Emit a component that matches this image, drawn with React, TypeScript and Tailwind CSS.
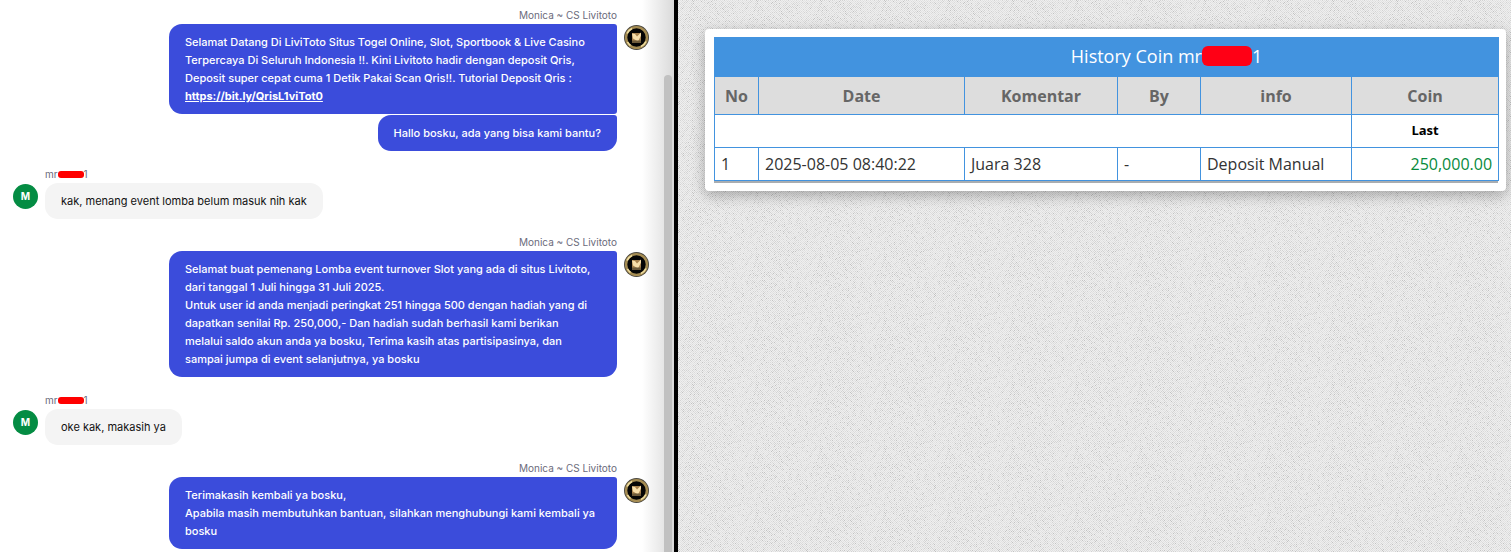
import clsx from "clsx"
import type { ReactNode } from "react"

type Message = {
  from: "agent" | "user"
  bubbles: ReactNode[]
}

const messages: Message[] = [
  {
    from: "agent",
    bubbles: [
      <>
        Selamat Datang Di LiviToto Situs Togel Online, Slot, Sportbook &amp; Live Casino Terpercaya Di
        Seluruh Indonesia !!. Kini Livitoto hadir dengan deposit Qris, Deposit super cepat cuma 1
        Detik Pakai Scan Qris!!. Tutorial Deposit Qris :<br />
        <a href="https://bit.ly/QrisL1viTot0" className="font-bold underline">
          https://bit.ly/QrisL1viTot0
        </a>
      </>,
      "Hallo bosku, ada yang bisa kami bantu?",
    ],
  },
  { from: "user", bubbles: ["kak, menang event lomba belum masuk nih kak"] },
  {
    from: "agent",
    bubbles: [
      <>
        Selamat buat pemenang Lomba event turnover Slot yang ada di situs Livitoto, dari tanggal 1
        Juli hingga 31 Juli 2025.
        <br />
        Untuk user id anda menjadi peringkat 251 hingga 500 dengan hadiah yang di dapatkan senilai
        Rp. 250,000,- Dan hadiah sudah berhasil kami berikan
        <br />
        melalui saldo akun anda ya bosku, Terima kasih atas partisipasinya, dan
        <br />
        sampai jumpa di event selanjutnya, ya bosku
      </>,
    ],
  },
  { from: "user", bubbles: ["oke kak, makasih ya"] },
  {
    from: "agent",
    bubbles: [
      <>
        Terimakasih kembali ya bosku,
        <br />
        Apabila masih membutuhkan bantuan, silahkan menghubungi kami kembali ya bosku
      </>,
    ],
  },
]

const headers = ["No", "Date", "Komentar", "By", "info", "Coin"]

// Woven dots for the wallpaper, one path per shade
const TILE = 64
const shades = ["#c2c2c2", "#d2d2d2", "#dbdbdb", "#e2e2e2"]
const dots = shades.map(() => "")
let seed = 7
for (let y = 0; y < TILE; y++) {
  for (let x = 0; x < TILE; x++) {
    seed = (seed * 1103515245 + 12345) % 2147483648
    const n = (seed >> 12) % 16
    if ((x + y) % 2 === 0) {
      const shade = n < 1 ? 0 : n < 4 ? 1 : n < 9 ? 2 : 3
      dots[shade] += `M${x} ${y}h1v1h-1z`
    }
  }
}

function Wallpaper() {
  return (
    <svg className="absolute inset-0 h-full w-full" aria-hidden="true" shapeRendering="crispEdges">
      <defs>
        <pattern id="weave" width={TILE} height={TILE} patternUnits="userSpaceOnUse">
          <rect width={TILE} height={TILE} fill="#efefef" />
          {dots.map((d, i) => (
            <path key={shades[i]} d={d} fill={shades[i]} />
          ))}
        </pattern>
      </defs>
      <rect width="100%" height="100%" fill="url(#weave)" />
    </svg>
  )
}

function AgentAvatar() {
  return (
    <svg viewBox="0 0 25 25" className="mt-[18px] size-[25px] shrink-0" aria-hidden="true">
      <circle cx="12.5" cy="12.5" r="12.5" fill="#4b4840" />
      <circle cx="12.5" cy="12.5" r="10.4" fill="#050505" stroke="#a58c52" strokeWidth="2.4" />
      <path
        d="M3 8.5a10.4 10.4 0 0 1 5-5M22 16.5a10.4 10.4 0 0 1-5 5M3.5 17a10 10 0 0 0 3 3.5"
        stroke="#eedda0"
        strokeWidth="1.6"
        fill="none"
      />
      <path d="M8 8h9v10H8z" fill="#a8834f" />
      <path d="M8 8.5l3 .5 2 2.500 4-4v3l-3 6-5-3z" fill="#f8dfaa" />
      <path d="M8 15.500h9V18H8z" fill="#6d5a3a" />
    </svg>
  )
}

function MessageGroup({ from, bubbles }: Message) {
  const agent = from === "agent"

  return (
    <div className={clsx("flex gap-[7px]", agent ? "justify-end" : "justify-start")}>
      {!agent && (
        <div className="mt-[18px] flex size-[25px] shrink-0 items-center justify-center rounded-full bg-[#048c43] text-[10px] font-bold text-white">
          M
        </div>
      )}
      <div className={clsx("flex max-w-[448px] flex-col gap-px", agent ? "items-end" : "items-start")}>
        <div className="flex items-center text-[10px] leading-4 text-[#6b6b7b]">
          {agent ? (
            "Monica ~ CS Livitoto"
          ) : (
            <>
              mr
              <span className="h-[7px] w-[26px] rounded-[3px] bg-[#ff0000]" />1
            </>
          )}
        </div>
        {bubbles.map((bubble, i) => (
          <div
            key={i}
            className={clsx(
              "px-4 py-[9px] leading-[18px]",
              agent
                ? "rounded-l-[13px] rounded-tr-[3px] bg-[#3b4cdb] font-medium text-white"
                : "rounded-[13px] bg-[#f4f4f4] text-[#111]",
              agent && i === 0 && bubbles.length > 1 && "rounded-br-[3px]",
              agent && i === bubbles.length - 1 && "rounded-br-[13px]"
            )}
          >
            {bubble}
          </div>
        ))}
      </div>
      {agent && <AgentAvatar />}
    </div>
  )
}

function Chat() {
  return (
    <section className="relative min-w-0 bg-white font-['Inter',sans-serif] text-[11px]">
      <div className="absolute inset-y-0 right-0 w-8 bg-linear-to-r from-white to-[#dadada]" />
      <div className="absolute top-[75px] right-[2px] bottom-0 w-2 rounded-t-full bg-[#c1c1c1]" />
      <div className="relative flex flex-col gap-[15px] pt-[7px] pr-[25px] pl-[13px]">
        {messages.map((message, i) => (
          <MessageGroup key={i} {...message} />
        ))}
      </div>
    </section>
  )
}

function History() {
  return (
    <section className="relative min-w-0 pt-[29px] pr-[5px] pl-[27px] font-['Open_Sans',sans-serif]">
      <Wallpaper />
      <div className="relative rounded-[4px] bg-white p-2 pl-[9px] shadow-[0_4px_14px_rgba(0,0,0,0.3)]">
        <div className="border-b-2 border-[#a9adb1]">
          <table className="w-full table-fixed border-collapse text-base text-[#333]">
            <colgroup>
              <col className="w-[44px]" />
              <col className="w-[206px]" />
              <col className="w-[153px]" />
              <col className="w-[83px]" />
              <col className="w-[151px]" />
              <col className="w-[147px]" />
            </colgroup>
            <thead>
              <tr className="h-[39px] bg-[#4293df]">
                <th
                  colSpan={6}
                  className="border border-[#4293df] p-0 pb-[2px] pl-[120px] text-lg font-normal text-white"
                >
                  <span className="flex items-center justify-center">
                    History Coin mr
                    <span className="h-5 w-[50px] rounded-[6px] bg-[#ff0015]" />1
                  </span>
                </th>
              </tr>
              <tr className="h-[38px] bg-[#dddddd] text-[#666]">
                {headers.map((header) => (
                  <th key={header} className="border border-[#4293df] p-0 font-bold">
                    {header}
                  </th>
                ))}
              </tr>
            </thead>
            <tbody>
              <tr className="h-[33px]">
                <td colSpan={5} className="border border-[#4293df]" />
                <td className="border border-[#4293df] p-0 text-center text-[13px] font-bold text-black">Last</td>
              </tr>
              <tr className="h-[33px]">
                <td className="border border-[#4293df] px-[6px] py-0">1</td>
                <td className="border border-[#4293df] px-[6px] py-0">2025-08-05 08:40:22</td>
                <td className="border border-[#4293df] px-[6px] py-0">Juara 328</td>
                <td className="border border-[#4293df] px-[6px] py-0">-</td>
                <td className="border border-[#4293df] px-[6px] py-0">Deposit Manual</td>
                <td className="border border-[#4293df] px-[6px] py-0 text-right text-[#078a3c]">250,000.00</td>
              </tr>
            </tbody>
          </table>
        </div>
      </div>
    </section>
  )
}

export default function App() {
  return (
    <main className="grid min-h-screen grid-cols-[674fr_4px_833fr]">
      <Chat />
      <div className="bg-black" />
      <History />
    </main>
  )
}
